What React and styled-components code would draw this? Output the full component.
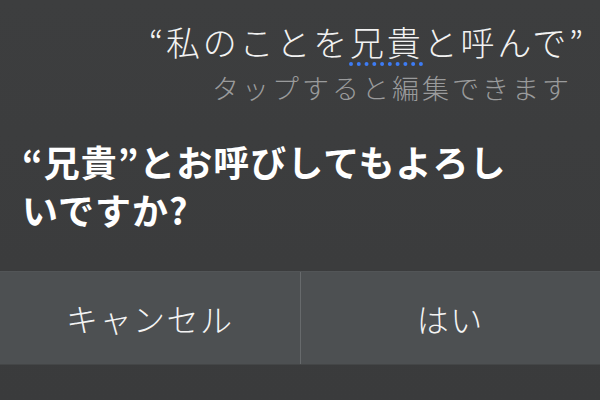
import React from 'react';
import styled, { createGlobalStyle } from 'styled-components';

const GlobalStyle = createGlobalStyle`
  html, body {
    margin: 0;
    padding: 0;
    background: #3b3c3d;
  }
  body {
    font-family: "Noto Sans CJK JP", "Noto Sans", sans-serif;
  }
`;

const Screen = styled.div`
  width: 600px;
  height: 400px;
  overflow: hidden;
  background: linear-gradient(180deg, #3d3e3f 0%, #3a3b3c 100%);
  display: flex;
  flex-direction: column;
`;

const Utterance = styled.div`
  display: flex;
  flex-direction: column;
  align-items: flex-end;
  padding: 20px 14px 0 0;
`;

const Quote = styled.div`
  color: #f2f2f2;
  font-size: 34px;
  font-weight: 300;
  line-height: 44px;
  letter-spacing: 2.8px;
`;

const Underlined = styled.span`
  text-decoration: underline dotted #3d7cf5;
  text-decoration-thickness: 4px;
  text-underline-offset: 6px;
`;

const Hint = styled.div`
  color: #9a9b9c;
  font-size: 27px;
  font-weight: 300;
  line-height: 36px;
  letter-spacing: 3px;
  margin: 6px 14px 0 0;
`;

const Question = styled.div`
  color: #ffffff;
  font-size: 36px;
  font-weight: 700;
  line-height: 48px;
  letter-spacing: 1px;
  padding: 31px 0 0 22px;
`;

const ButtonBar = styled.div`
  margin-top: 38px;
  height: 92px;
  display: flex;
  background: #4d5052;
  border-top: 1px solid #525557;
  border-bottom: 1px solid #444647;
`;

const Button = styled.button`
  flex: 1;
  border: none;
  background: transparent;
  color: #f4f4f4;
  font-family: inherit;
  font-size: 32px;
  font-weight: 300;
  letter-spacing: 1.5px;
  border-left: ${(p) => (p.divided ? '1px solid #676a6c' : 'none')};
  padding: 0;
  cursor: pointer;
`;

export default function App() {
  return (
    <>
      <GlobalStyle />
      <Screen>
        <Utterance>
          <Quote>
            “私のことを<Underlined>兄貴</Underlined>と呼んで”
          </Quote>
          <Hint>タップすると編集できます</Hint>
        </Utterance>
        <Question>
          “兄貴”とお呼びしてもよろし
          <br />
          いですか?
        </Question>
        <ButtonBar>
          <Button>キャンセル</Button>
          <Button divided>はい</Button>
        </ButtonBar>
      </Screen>
    </>
  );
}
